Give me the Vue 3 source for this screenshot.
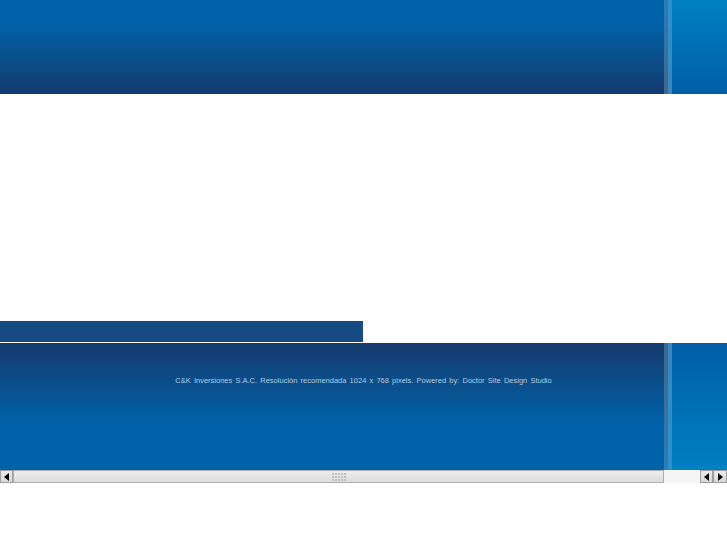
<script setup>
const grip = Array.from({ length: 15 })
</script>

<template>
  <div class="page">
    <header class="band band-top">
      <div class="main main-top"></div>
      <div class="stripe-a top"></div>
      <div class="stripe-b top"></div>
      <div class="side side-top"></div>
    </header>
    <section class="content"></section>
    <div class="bar"></div>
    <footer class="band band-bottom">
      <div class="main main-bottom">
        <p class="legal">C&amp;K Inversiones S.A.C. Resolución recomendada 1024 x 768 pixels. Powered by: Doctor Site Design Studio</p>
      </div>
      <div class="stripe-a bottom"></div>
      <div class="stripe-b bottom"></div>
      <div class="side side-bottom"></div>
    </footer>
    <div class="scrollbar">
      <div class="btn"><span class="arrow left"></span></div>
      <div class="thumb">
        <div class="grip"><i v-for="(_, n) in grip" :key="n"></i></div>
      </div>
      <div class="gap"></div>
      <div class="btn"><span class="arrow left"></span></div>
      <div class="btn last"><span class="arrow right"></span></div>
    </div>
  </div>
</template>

<style scoped>
.page {
  width: 727px;
  height: 545px;
  background: #fff;
  overflow: hidden;
  display: flex;
  flex-direction: column;
}
.band {
  display: flex;
  flex: none;
}
.band-top {
  height: 94px;
}
.band-bottom {
  height: 127px;
  margin-top: 1px;
}
.main {
  width: 664px;
  flex: none;
}
.main-top {
  background: linear-gradient(#0063a9 0, #0063a9 22px, #153b6d 100%);
}
.main-bottom {
  background: linear-gradient(#153b6d 0, #0063a9 82px, #0063a9 100%);
}
.stripe-a {
  width: 4px;
  flex: none;
}
.stripe-a.top {
  background: linear-gradient(#2e7db8, #3f668f);
}
.stripe-a.bottom {
  background: linear-gradient(#3f668f, #2e7db8);
}
.stripe-b {
  width: 4px;
  flex: none;
}
.stripe-b.top {
  background: linear-gradient(#2a93d0, #3a86bb);
}
.stripe-b.bottom {
  background: linear-gradient(#3a86bb, #2a93d0);
}
.side {
  flex: 1;
}
.side-top {
  background: linear-gradient(#0080c4, #005fa6);
}
.side-bottom {
  background: linear-gradient(#005fa6, #0080c4);
}
.content {
  height: 227px;
  flex: none;
}
.bar {
  width: 363px;
  height: 21px;
  flex: none;
  box-sizing: border-box;
  background: #164a82;
}
.legal {
  margin: 32px 0 0;
  width: 727px;
  text-align: center;
  font: 7.5px/11px "Liberation Sans", Arial, sans-serif;
  word-spacing: 1.1px;
  color: #b0cae2;
  white-space: nowrap;
}
.scrollbar {
  height: 13px;
  flex: none;
  display: flex;
  background: #f5f5f5;
}
.btn {
  width: 13px;
  flex: none;
  box-sizing: border-box;
  background: linear-gradient(#ececec, #d8d8d8);
  border: 1px solid #9c9c9c;
  display: flex;
  align-items: center;
  justify-content: center;
}
.btn.last {
  width: 14px;
}
.arrow {
  width: 0;
  height: 0;
  border-top: 4px solid transparent;
  border-bottom: 4px solid transparent;
}
.arrow.left {
  border-right: 5px solid #000;
}
.arrow.right {
  border-left: 5px solid #000;
}
.thumb {
  width: 651px;
  flex: none;
  box-sizing: border-box;
  background: linear-gradient(#eeeeee, #dcdcdc);
  border: 1px solid #adadad;
  display: flex;
  align-items: center;
  justify-content: center;
}
.grip {
  display: grid;
  grid-template-columns: repeat(5, 2px);
  grid-auto-rows: 2px;
  gap: 1px;
}
.grip i {
  background: #c0c0c0;
}
.gap {
  flex: 1;
}
</style>
